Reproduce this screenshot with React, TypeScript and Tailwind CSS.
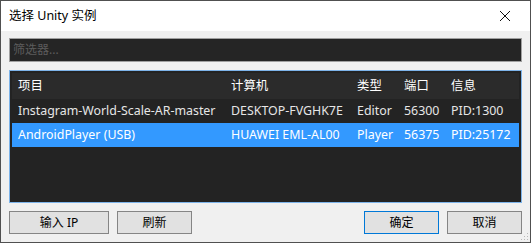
const rows = [
  { name: 'Instagram-World-Scale-AR-master', host: 'DESKTOP-FVGHK7E', type: 'Editor', port: '56300', info: 'PID:1300', selected: false },
  { name: 'AndroidPlayer (USB)', host: 'HUAWEI EML-AL00', type: 'Player', port: '56375', info: 'PID:25172', selected: true },
];

const font = { fontFamily: '"Noto Sans", "Noto Sans CJK SC", sans-serif' };

function Btn({ label, primary, className }: { label: string; primary?: boolean; className?: string }) {
  return (
    <button
      className={
        (primary
          ? 'h-[23px] w-[75px] border border-[#0078d7] bg-[#e1e1e1] text-[12px] text-black '
          : 'h-[23px] w-[75px] border border-[#858585] bg-[#e1e1e1] text-[12px] text-black ') + (className ?? '')
      }
    >
      {label}
    </button>
  );
}

export default function App() {
  return (
    <div className="relative flex h-[243px] w-[531px] flex-col border border-[#505050] bg-[#f0f0f0]" style={font}>
      <div className="flex h-[30px] items-center justify-between bg-white pl-2 pr-4">
        <span className="text-[12.5px] text-black">选择 Unity 实例</span>
        <svg width="12" height="12" viewBox="0 0 12 12" className="mr-[3px]">
          <path d="M1 1L11 11M11 1L1 11" stroke="#111" strokeWidth="1" />
        </svg>
      </div>

      <div className="flex flex-1 flex-col px-2">
        <div className="mt-[7px] flex h-6 items-center border border-[#a0a0a0] bg-[#252525] px-[3px] text-[12px] text-[#5c5c5c]">
          筛选器...
        </div>

        <div className="mt-2 h-[133px] border border-[#7eb4ea] bg-[#232323] p-[2px] text-[12.4px]">
          <div className="grid h-[26px] grid-cols-[213px_126px_47px_47px_1fr] items-center bg-[#2b2b2b] pl-[6px] text-white">
            <span>项目</span>
            <span>计算机</span>
            <span>类型</span>
            <span>端口</span>
            <span>信息</span>
          </div>
          {rows.map((r) => (
            <div
              key={r.name}
              className={
                r.selected
                  ? 'grid h-6 grid-cols-[213px_126px_47px_47px_1fr] items-center bg-[#3399ff] pl-[6px] text-white'
                  : 'grid h-6 grid-cols-[213px_126px_47px_47px_1fr] items-center pl-[6px] text-[#e6e6e6]'
              }
            >
              <span className="whitespace-nowrap">{r.name}</span>
              <span className="whitespace-nowrap">{r.host}</span>
              <span>{r.type}</span>
              <span>{r.port}</span>
              <span>{r.info}</span>
            </div>
          ))}
        </div>

        <div className="mt-2 flex items-start">
          <button className="h-[23px] w-[100px] border border-[#858585] bg-[#e1e1e1] text-[12px] text-black">输入 IP</button>
          <Btn label="刷新" className="ml-2" />
          <Btn label="确定" primary className="ml-auto" />
          <Btn label="取消" className="ml-2" />
        </div>
      </div>

      <svg width="8" height="8" viewBox="0 0 8 8" className="absolute bottom-[1px] right-[1px]">
        <rect x="6" y="0" width="1" height="1" fill="#b8b8b8" />
        <rect x="3" y="3" width="1" height="1" fill="#b8b8b8" />
        <rect x="6" y="3" width="1" height="1" fill="#b8b8b8" />
        <rect x="0" y="6" width="1" height="1" fill="#b8b8b8" />
        <rect x="3" y="6" width="1" height="1" fill="#b8b8b8" />
        <rect x="6" y="6" width="1" height="1" fill="#b8b8b8" />
      </svg>
    </div>
  );
}
